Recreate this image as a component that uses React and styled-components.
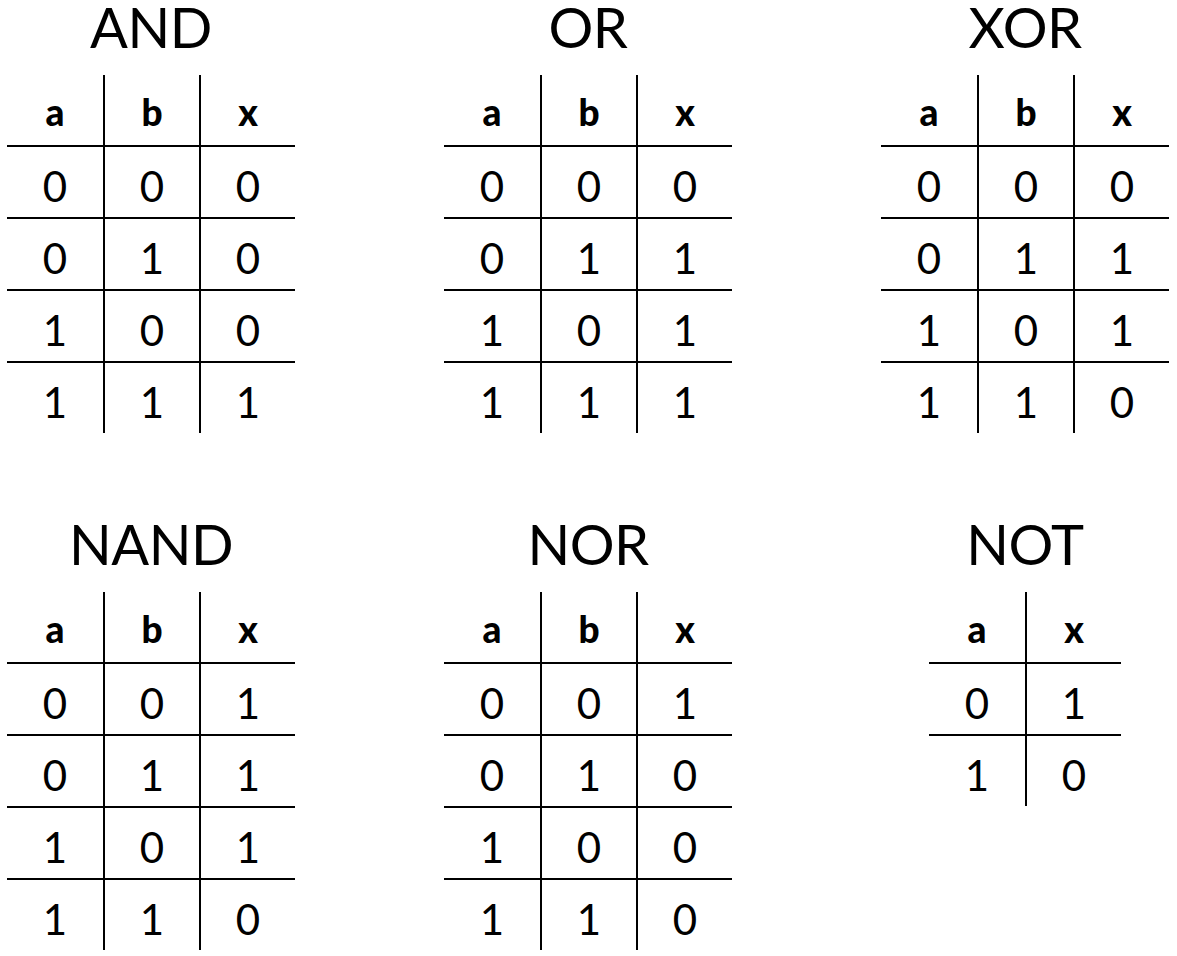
import React from "react";
import styled, { createGlobalStyle } from "styled-components";

const GlobalStyle = createGlobalStyle`
  html, body {
    margin: 0;
    padding: 0;
    background: #ffffff;
  }
  body {
    font-family: Lato, "Open Sans", sans-serif;
    color: #000000;
  }
`;

const Page = styled.main`
  display: grid;
  grid-template-columns: repeat(3, 288px);
  column-gap: 149px;
  row-gap: 84px;
  align-content: start;
  padding-left: 7px;
  width: 1177px;
  height: 956px;
  box-sizing: border-box;
  overflow: hidden;
`;

const Gate = styled.section`
  display: flex;
  flex-direction: column;
  align-items: center;
`;

const Title = styled.h2`
  margin: 0;
  box-sizing: border-box;
  height: 75px;
  padding-top: 6px;
  font-size: 56px;
  font-weight: 400;
  line-height: 42px;
  letter-spacing: -0.5px;
`;

const Table = styled.div`
  display: grid;
  grid-template-columns: repeat(${(p) => p.$cols}, 96px);
`;

const Cell = styled.div`
  box-sizing: border-box;
  height: ${(p) => (p.$last ? 70 : 72)}px;
  border-bottom: ${(p) => (p.$last ? "none" : "2px solid #000")};
  border-left: ${(p) => (p.$first ? "none" : "2px solid #000")};
  display: flex;
  align-items: center;
  justify-content: center;
  padding-top: ${(p) => (p.$header ? 5 : 8)}px;
  font-size: ${(p) => (p.$header ? 37 : 42)}px;
  font-weight: ${(p) => (p.$header ? 900 : 400)};
  line-height: 1.2;
`;

const gates = [
  { name: "AND", head: ["a", "b", "x"], rows: [["0", "0", "0"], ["0", "1", "0"], ["1", "0", "0"], ["1", "1", "1"]] },
  { name: "OR", head: ["a", "b", "x"], rows: [["0", "0", "0"], ["0", "1", "1"], ["1", "0", "1"], ["1", "1", "1"]] },
  { name: "XOR", head: ["a", "b", "x"], rows: [["0", "0", "0"], ["0", "1", "1"], ["1", "0", "1"], ["1", "1", "0"]] },
  { name: "NAND", head: ["a", "b", "x"], rows: [["0", "0", "1"], ["0", "1", "1"], ["1", "0", "1"], ["1", "1", "0"]] },
  { name: "NOR", head: ["a", "b", "x"], rows: [["0", "0", "1"], ["0", "1", "0"], ["1", "0", "0"], ["1", "1", "0"]] },
  { name: "NOT", head: ["a", "x"], rows: [["0", "1"], ["1", "0"]] },
];

function TruthTable({ gate }) {
  const cols = gate.head.length;
  return (
    <Gate>
      <Title>{gate.name}</Title>
      <Table $cols={cols}>
        {gate.head.map((h, i) => (
          <Cell key={"h" + i} $header $first={i === 0}>
            {h}
          </Cell>
        ))}
        {gate.rows.map((row, r) =>
          row.map((v, i) => (
            <Cell key={r + "-" + i} $first={i === 0} $last={r === gate.rows.length - 1}>
              {v}
            </Cell>
          ))
        )}
      </Table>
    </Gate>
  );
}

export default function App() {
  return (
    <>
      <GlobalStyle />
      <Page>
        {gates.map((g) => (
          <TruthTable key={g.name} gate={g} />
        ))}
      </Page>
    </>
  );
}
